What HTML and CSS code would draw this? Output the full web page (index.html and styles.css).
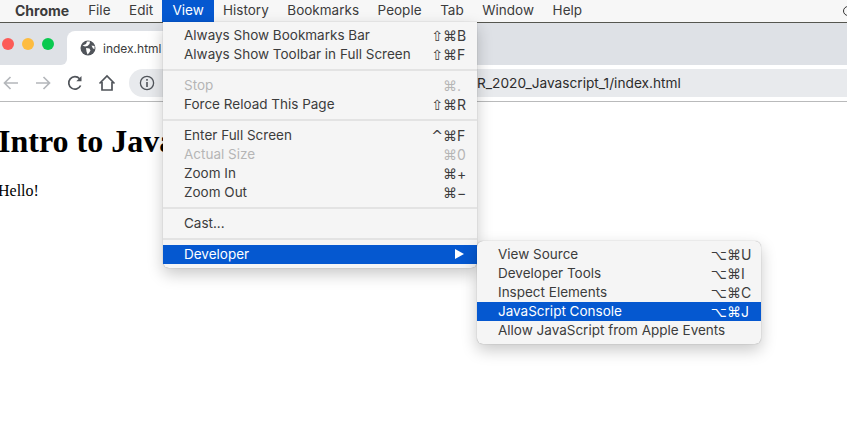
FILE: index.html
```html
<!DOCTYPE html>
<html lang="en">
<head>
    <meta charset="UTF-8">
    <meta name="viewport" content="width=device-width, initial-scale=1.0">
    <title>Chrome View Menu</title>
    <link rel="stylesheet" href="styles.css">
</head>
<body>
    <nav class="menubar">
        <span class="menubar-item app-name">Chrome</span>
        <span class="menubar-item">File</span>
        <span class="menubar-item">Edit</span>
        <span class="menubar-item active">View</span>
        <span class="menubar-item">History</span>
        <span class="menubar-item">Bookmarks</span>
        <span class="menubar-item">People</span>
        <span class="menubar-item">Tab</span>
        <span class="menubar-item">Window</span>
        <span class="menubar-item">Help</span>
        <span class="status-icon"></span>
    </nav>

    <div class="tabstrip">
        <div class="traffic-lights">
            <span class="light red"></span>
            <span class="light yellow"></span>
            <span class="light green"></span>
        </div>
        <div class="tab">
            <svg class="globe" width="16" height="16" viewBox="0 0 16 16">
                <circle cx="8" cy="8" r="7.5" fill="#50545a"/>
                <path d="M2.5 5.5 L6 4 L7 1.5 L10 1.5 L9.5 4 L7.5 6 L5 6.5 Z M6 8 L9.5 8.5 L10.5 10.5 L9 13 L7.5 14.5 L6.5 11.5 Z M11.5 5.5 L14.5 6 L14.5 9 L13 8.5 Z" fill="#fff"/>
            </svg>
            <span class="tab-title">index.html</span>
        </div>
    </div>

    <div class="toolbar">
        <svg class="tool" width="18" height="18" viewBox="0 0 18 18" fill="none" stroke="#b4b7bb" stroke-width="1.7">
            <path d="M16 9 H3 M8.5 3 L2.5 9 L8.5 15"/>
        </svg>
        <svg class="tool" width="18" height="18" viewBox="0 0 18 18" fill="none" stroke="#b4b7bb" stroke-width="1.7">
            <path d="M2 9 H15 M9.5 3 L15.5 9 L9.5 15"/>
        </svg>
        <svg class="tool" width="18" height="18" viewBox="0 0 18 18" fill="none" stroke="#50545a" stroke-width="1.7">
            <path d="M14.6 11.5 A6.2 6.2 0 1 1 13.6 4.8"/>
            <path d="M15.5 2 V7.2 H10.3 Z" fill="#50545a" stroke="none"/>
        </svg>
        <svg class="tool" width="18" height="18" viewBox="0 0 18 18" fill="none" stroke="#50545a" stroke-width="1.7">
            <path d="M1.5 9.5 L9 2 L16.5 9.5 M4 8 V16 H14 V8"/>
        </svg>
        <div class="omnibox">
            <svg width="16" height="16" viewBox="0 0 16 16" fill="none" stroke="#50545a" stroke-width="1.3">
                <circle cx="8" cy="8" r="6.6"/>
                <path d="M8 7 V12" stroke-width="1.6"/>
                <path d="M8 4 V5.7" stroke-width="1.6"/>
            </svg>
            <span class="url">R_2020_Javascript_1/index.html</span>
        </div>
    </div>

    <main class="page">
        <h1>Intro to Java</h1>
        <p>Hello!</p>
    </main>

    <div class="menu view-menu">
        <div class="row"><span>Always Show Bookmarks Bar</span><span class="keys"><i>⇧⌘</i><b>B</b></span></div>
        <div class="row"><span>Always Show Toolbar in Full Screen</span><span class="keys"><i>⇧⌘</i><b>F</b></span></div>
        <div class="sep"></div>
        <div class="row disabled"><span>Stop</span><span class="keys"><i>⌘</i><b>.</b></span></div>
        <div class="row"><span>Force Reload This Page</span><span class="keys"><i>⇧⌘</i><b>R</b></span></div>
        <div class="sep"></div>
        <div class="row"><span>Enter Full Screen</span><span class="keys"><i>^⌘</i><b>F</b></span></div>
        <div class="row disabled"><span>Actual Size</span><span class="keys"><i>⌘</i><b>0</b></span></div>
        <div class="row"><span>Zoom In</span><span class="keys"><i>⌘</i><b>+</b></span></div>
        <div class="row"><span>Zoom Out</span><span class="keys"><i>⌘</i><b>−</b></span></div>
        <div class="sep"></div>
        <div class="row"><span>Cast...</span></div>
        <div class="sep"></div>
        <div class="row selected"><span>Developer</span><span class="arrow"></span></div>
    </div>

    <div class="menu dev-menu">
        <div class="row"><span>View Source</span><span class="keys"><i>⌥⌘</i><b>U</b></span></div>
        <div class="row"><span>Developer Tools</span><span class="keys"><i>⌥⌘</i><b>I</b></span></div>
        <div class="row"><span>Inspect Elements</span><span class="keys"><i>⌥⌘</i><b>C</b></span></div>
        <div class="row selected"><span>JavaScript Console</span><span class="keys"><i>⌥⌘</i><b>J</b></span></div>
        <div class="row"><span>Allow JavaScript from Apple Events</span></div>
    </div>
</body>
</html>
```

FILE: styles.css
```css
* {
    box-sizing: border-box;
}
html, body {
    height: 100%;
}
body {
    margin: 0;
    overflow: hidden;
    background-color: white;
    font-family: Inter, "Liberation Sans", sans-serif;
    font-size: 13.5px;
    color: #3c3c3c;
}

/* mac menu bar */
.menubar {
    display: flex;
    align-items: center;
    height: 23px;
    padding-left: 5px;
    background-color: #f7f7f7;
    border-bottom: 1px solid #55564f;
}
.menubar-item {
    height: 22px;
    line-height: 21px;
    padding: 0 9.3px;
}
.app-name {
    font-size: 14px;
    font-weight: 700;
    padding: 0 9.7px 0 10px;
}
.menubar-item.active {
    padding: 0 10px;
    background-color: #0558d0;
    color: white;
}
.status-icon {
    width: 10px;
    height: 10px;
    margin-left: auto;
    margin-right: -6px;
    border: 1.5px solid #333;
    border-radius: 50%;
}

/* tabs */
.tabstrip {
    display: flex;
    height: 42px;
    background: linear-gradient(to right, white 67px, #dee1e6 67px);
}
.traffic-lights {
    display: flex;
    gap: 8px;
    width: 67px;
    padding: 15px 0 0 2px;
    background-color: #dee1e6;
    border-bottom-right-radius: 6px;
}
.light {
    width: 12px;
    height: 12px;
    border-radius: 50%;
}
.red { background-color: #fc5b57; }
.yellow { background-color: #fdbc40; }
.green { background-color: #0ac94f; }
.tab {
    display: flex;
    align-items: center;
    gap: 7px;
    width: 150px;
    height: 34px;
    margin-top: 8px;
    padding-left: 13px;
    background-color: white;
    border-radius: 8px 8px 0 0;
    font-size: 12px;
}

/* toolbar */
.toolbar {
    display: flex;
    align-items: center;
    height: 37px;
    padding-left: 2px;
    background-color: white;
    border-bottom: 1px solid #b9babb;
}
.tool {
    margin: 0 7px;
}
.toolbar .tool:first-child {
    margin: 0 7px 0 0;
}
.omnibox {
    display: flex;
    align-items: center;
    flex: 1;
    height: 28px;
    margin-left: 6px;
    padding-left: 10px;
    background-color: #e8eaed;
    border-radius: 14px 0 0 14px;
}
.url {
    margin-left: 322px;
    font-size: 13.7px;
    color: #2c2c2c;
}

/* page body */
.page {
    margin-left: -2px;
    font-family: "Liberation Serif", serif;
    color: black;
}
h1 {
    width: 170px;
    height: 37px;
    margin: 21px 0 0;
    overflow: hidden;
    font-size: 32px;
    line-height: 37px;
    white-space: nowrap;
}
p {
    margin: 22px 0 0;
    font-size: 16px;
    line-height: 18px;
}

/* dropdown menus float over everything */
.menu {
    position: absolute;
    padding: 4px 0;
    background-color: #f5f5f5;
    box-shadow: 0 0 1px rgba(0, 0, 0, 0.4), 0 6px 16px rgba(0, 0, 0, 0.22);
}
.view-menu {
    left: 163px;
    top: 22px;
    width: 314px;
    border-radius: 0 0 6px 6px;
}
.dev-menu {
    left: 477px;
    top: 241px;
    width: 284px;
    border-radius: 6px;
}
.row {
    display: flex;
    justify-content: space-between;
    align-items: center;
    height: 19px;
    padding: 0 10px 1px 21px;
    white-space: nowrap;
}
.row.disabled {
    color: #b5b5b5;
}
.row.selected {
    background-color: #0558d0;
    color: white;
}
.sep {
    height: 2px;
    margin: 5px 0;
    background-color: #e3e3e3;
}
.keys {
    display: flex;
    align-items: baseline;
    font-family: "DejaVu Sans", sans-serif;
}
.keys i {
    font-style: normal;
    font-size: 14px;
}
.keys b {
    width: 10px;
    font-family: Inter, sans-serif;
    font-size: 14px;
    font-weight: 400;
}
.arrow {
    width: 0;
    height: 0;
    margin-right: 3px;
    border-left: 9px solid white;
    border-top: 5px solid transparent;
    border-bottom: 5px solid transparent;
}
```
